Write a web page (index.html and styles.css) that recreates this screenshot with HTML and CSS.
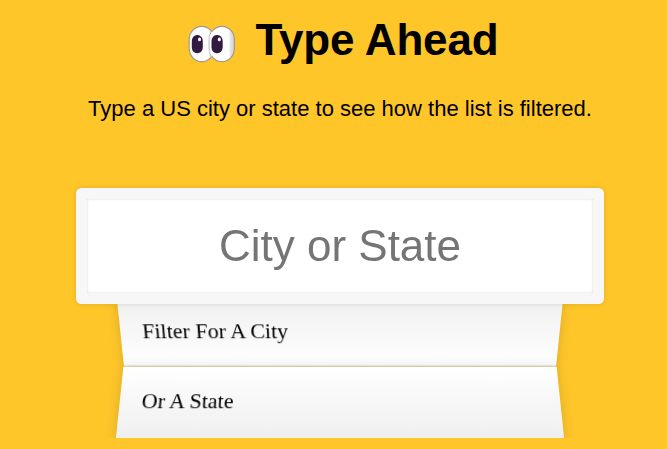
FILE: index.html
```
<!DOCTYPE html>
<html lang="en">
<head>
<meta charset="utf-8">
<title>Type Ahead</title>
<link rel="stylesheet" href="styles.css">
</head>
<body>
<main class="page">
  <h1 class="title">
    <svg class="eyes" viewBox="0 0 48 38" aria-hidden="true">
      <defs>
        <linearGradient id="eye" x1="0" x2="1">
          <stop offset="0.78" stop-color="#fff"/>
          <stop offset="0.84" stop-color="#e4e4e6"/>
          <stop offset="1" stop-color="#d0d0d3"/>
        </linearGradient>
      </defs>
      <rect x="1.2" y="1.4" width="25" height="35.2" rx="12.5" ry="13" fill="url(#eye)" stroke="#a29a91" stroke-width="1.2"/>
      <rect x="21.4" y="1.4" width="25" height="35.2" rx="12.5" ry="13" fill="url(#eye)" stroke="#a29a91" stroke-width="1.2"/>
      <path d="M21.4 15 Q21.4 10 24 6 V32 Q21.4 28 21.4 23Z" fill="#fff"/>
      <path d="M21.6 11 Q20.7 19 21.6 27" fill="none" stroke="#d8d8da" stroke-width="1.6"/>
      <rect x="3.8" y="10" width="11" height="18.3" rx="5.2" ry="6" fill="#321b41"/>
      <rect x="23.5" y="10" width="11.2" height="18.3" rx="5.2" ry="6" fill="#321b41"/>
      <ellipse cx="11.5" cy="14.4" rx="1.5" ry="1.9" fill="#fff"/>
      <ellipse cx="31.3" cy="14.4" rx="1.5" ry="1.9" fill="#fff"/>
    </svg>
    <span>Type Ahead</span>
  </h1>
  <p class="intro">Type a US city or state to see how the list is filtered.</p>
  <form class="search-form">
    <input type="text" class="search" placeholder="City or State">
    <ul class="suggestions">
      <li>Filter for a city</li>
      <li>or a state</li>
    </ul>
  </form>
</main>
</body>
</html>
```
FILE: styles.css
```
* {
  box-sizing: border-box;
}

html {
  overflow: hidden;
  background: #fec629;
}

body {
  margin: 0;
}

.page {
  width: 680px;
  font-family: "Liberation Sans", Arial, sans-serif;
  color: #000;
}

.title {
  display: flex;
  align-items: center;
  gap: 19.5px;
  height: 50px;
  margin: 15px 0 0 188px;
  font-size: 44px;
  line-height: 50px;
  letter-spacing: -0.15px;
  white-space: nowrap;
}

.eyes {
  width: 48px;
  height: 38px;
  margin-top: 7px;
}

.intro {
  margin: 31px 0 0;
  font-size: 22px;
  line-height: 25px;
  text-align: center;
}

.search-form {
  width: 440px;
  margin: 67px auto 0;
}

.search {
  display: block;
  position: relative;
  z-index: 2;
  width: 528px;
  height: 116px;
  margin: 0 -44px;
  padding: 0;
  border: 11px solid #f7f7f7;
  border-radius: 5.5px;
  outline: 0;
  background: #fff;
  box-shadow: 0 0 5.5px rgba(0, 0, 0, 0.12), inset 0 0 2.2px rgba(0, 0, 0, 0.19);
  font: 44px "Liberation Sans", Arial, sans-serif;
  text-align: center;
}

.search::placeholder {
  color: #757575;
}

.suggestions {
  margin: -11px 0 0;
  padding: 0;
  list-style: none;
  font: 22px/26px "Liberation Serif", "Times New Roman", serif;
}

.suggestions li {
  height: 71px;
  padding: 22px;
  border-bottom: 1px solid #d8d8d8;
  box-shadow: 0 0 11px rgba(0, 0, 0, 0.14);
  text-transform: capitalize;
}

.suggestions li:nth-child(odd) {
  transform: perspective(110px) rotateX(-3deg) translateY(3.3px);
  background: linear-gradient(to top, #fff 0%, #efefef 100%);
}

.suggestions li:nth-child(even) {
  height: 74px;
  transform: perspective(110px) rotateX(3deg) translateY(2.2px) scale(1.001);
  background: linear-gradient(to bottom, #fff 0%, #efefef 100%);
}
```
